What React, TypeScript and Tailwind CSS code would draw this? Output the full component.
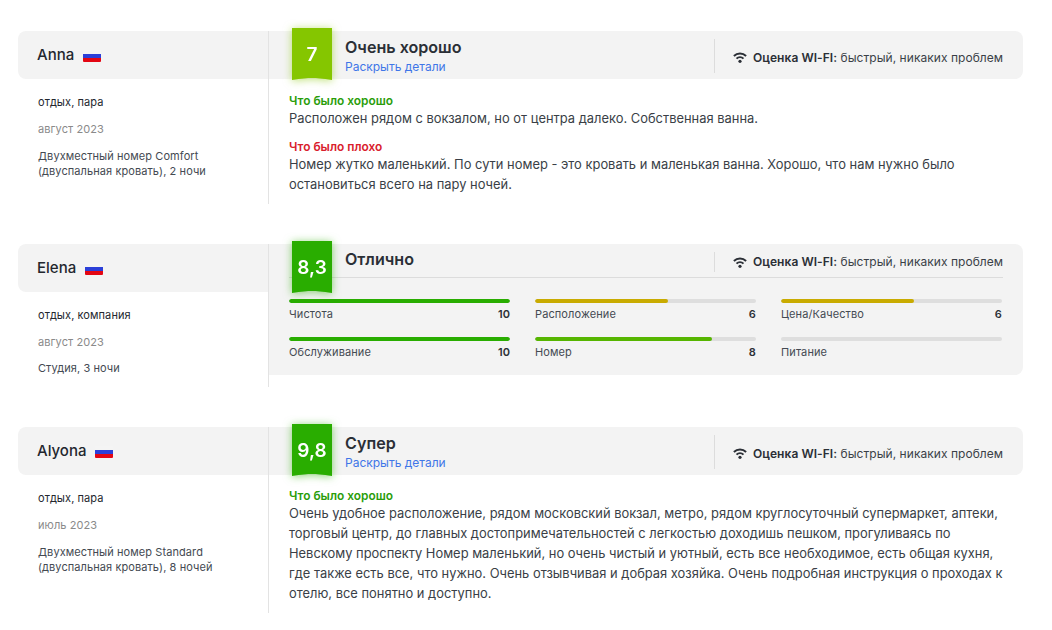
import React from "react";

const font = "font-['Inter','Noto_Sans',sans-serif]";

function Flag() {
  return (
    <span className="ml-[9px] mt-[2px] flex h-[12px] w-[18px] flex-col overflow-hidden rounded-[1px]">
      <span className="h-1 bg-[#f4f4f4]" />
      <span className="h-1 bg-[#2b3fd8]" />
      <span className="h-1 bg-[#e30613]" />
    </span>
  );
}

function Wifi() {
  return (
    <svg width="14" height="11" viewBox="0 0 14 11" className="shrink-0">
      <path d="M0.9 4a8.8 8.8 0 0 1 12.2 0" fill="none" stroke="#2b2f36" strokeWidth="2" />
      <path d="M3.5 6.6a5 5 0 0 1 7 0" fill="none" stroke="#2b2f36" strokeWidth="2" />
      <circle cx="7" cy="9.3" r="1.6" fill="#2b2f36" />
    </svg>
  );
}

function Badge({ value, color, glow }: { value: string; color: string; glow: string }) {
  return (
    <div className={`-mt-[3px] ml-[23px] h-[52px] w-10 shrink-0 ${glow}`}>
      <div
        className={`flex h-full w-full items-center justify-center pt-[2px] text-[19px] font-semibold text-white ${color} [clip-path:path('M0_0H40V52C30_50.5_25_50_20_50C15_50_10_50.5_0_52Z')]`}
      >
        {value}
      </div>
    </div>
  );
}

function WifiNote({ box }: { box: string }) {
  return (
    <div className={`flex w-[289px] shrink-0 items-center self-start border-l border-[#dcdcdc] pl-[18px] text-[12px] tracking-[0.05px] text-[#3a3f47] ${box}`}>
      <Wifi />
      <span className="ml-[6px] whitespace-nowrap">
        <b className="font-semibold text-[#2b2f36]">Оценка WI-FI:</b> быстрый, никаких проблем
      </span>
    </div>
  );
}

function LeftColumn({ name, trip, date, room, roomGap = "mt-3" }: { name: string; trip: string; date: string; room: React.ReactNode; roomGap?: string }) {
  return (
    <div className="w-[250px] shrink-0">
      <div className="flex h-12 items-center rounded-l-lg bg-[#f3f3f3] pl-[19px] text-[15px] font-medium text-[#23272e]">
        {name}
        <Flag />
      </div>
      <div className="pl-5 text-[11px] tracking-[0.08px] text-[#444a52]">
        <div className="mt-[15px] leading-4 text-[#23272e]">{trip}</div>
        <div className="mt-[11px] leading-4 text-[#8a8a8a]">{date}</div>
        <div className={`${roomGap} leading-[15px]`}>{room}</div>
      </div>
    </div>
  );
}

function Bar({ label, value, pct, color }: { label: string; value?: string; pct: number; color: string }) {
  return (
    <div className="w-[221px]">
      <div className="h-1 overflow-hidden rounded-full bg-[#dedede]">
        <div className={`h-full rounded-full ${color}`} style={{ width: `${pct}%` }} />
      </div>
      <div className="mt-[3px] flex justify-between text-[11px] leading-4 tracking-[0.1px] text-[#444a52]">
        <span>{label}</span>
        {value && <b className="font-semibold text-[#2b2f36]">{value}</b>}
      </div>
    </div>
  );
}

function Good({ children, mt }: { children: React.ReactNode; mt: string }) {
  return (
    <div className={`${mt} pl-5`}>
      <div className="text-[11.9px] font-semibold leading-[15px] text-[#2a9d0a]">Что было хорошо</div>
      <div className="text-[12.91px] leading-5 text-[#3a3f47]">{children}</div>
    </div>
  );
}

function DetailsHeader({ value, color, glow, title }: { value: string; color: string; glow: string; title: string }) {
  return (
    <div className="flex h-12 items-center rounded-r-lg bg-[#f3f3f3] pr-5">
      <div className="self-start">
        <Badge value={value} color={color} glow={glow} />
      </div>
      <div className="ml-[13px] flex-1">
        <div className="text-[16.1px] font-semibold leading-5 text-[#2b2f36]">{title}</div>
        <div className="mt-[3px] text-[12px] leading-[14px] text-[#3f76e8]">Раскрыть детали</div>
      </div>
      <WifiNote box="mt-2 h-[34px] pt-[3px]" />
    </div>
  );
}

const glowLight = "drop-shadow-[0_1px_4px_rgba(133,199,0,0.55)]";
const glowGreen = "drop-shadow-[0_1px_4px_rgba(42,173,0,0.55)]";

export default function App() {
  return (
    <div className={`${font} h-[630px] w-[1052px] overflow-hidden bg-white pl-[18px] pt-[31px]`}>
      <div className="flex h-[173px] w-[1005px]">
        <LeftColumn
          name="Anna"
          trip="отдых, пара"
          date="август 2023"
          room={<>Двухместный номер Comfort<br />(двуспальная кровать), 2 ночи</>}
        />
        <div className="flex-1 border-l border-[#e3e3e3]">
          <DetailsHeader value="7" color="bg-[#85c600]" glow={glowLight} title="Очень хорошо" />
          <Good mt="mt-[14px]">Расположен рядом с вокзалом, но от центра далеко. Собственная ванна.</Good>
          <div className="mt-[11px] pl-5">
            <div className="text-[11.9px] font-semibold leading-[15px] text-[#d9202c]">Что было плохо</div>
            <div className="text-[12.91px] leading-5 text-[#3a3f47]">
              Номер жутко маленький. По сути номер - это кровать и маленькая ванна. Хорошо, что нам нужно было<br />
              остановиться всего на пару ночей.
            </div>
          </div>
        </div>
      </div>

      <div className="mt-10 flex h-[143px] w-[1005px]">
        <LeftColumn name="Elena" trip="отдых, компания" date="август 2023" room="Студия, 3 ночи" roomGap="mt-[11px]" />
        <div className="flex-1 border-l border-[#e3e3e3]">
          <div className="h-[131px] rounded-r-lg bg-[#f3f3f3] pr-5">
            <div className="ml-5 flex h-[34px] items-center border-b border-[#dcdcdc]">
              <div className="-ml-5 self-start">
                <Badge value="8,3" color="bg-[#29ad00]" glow={glowGreen} />
              </div>
              <div className="ml-[13px] flex-1 pb-[2px] text-[16.1px] font-semibold text-[#2b2f36]">Отлично</div>
              <WifiNote box="mt-2 h-5" />
            </div>
            <div className="ml-5 mt-[21px] grid grid-cols-[221px_221px_221px] gap-x-[25px] gap-y-[15px]">
              <Bar label="Чистота" value="10" pct={100} color="bg-[#29ad00]" />
              <Bar label="Расположение" value="6" pct={60} color="bg-[#c9ab00]" />
              <Bar label="Цена/Качество" value="6" pct={60} color="bg-[#c9ab00]" />
              <Bar label="Обслуживание" value="10" pct={100} color="bg-[#29ad00]" />
              <Bar label="Номер" value="8" pct={80} color="bg-[#56b500]" />
              <Bar label="Питание" pct={0} color="bg-[#dedede]" />
            </div>
          </div>
        </div>
      </div>

      <div className="mt-10 flex h-[186px] w-[1005px]">
        <LeftColumn
          name="Alyona"
          trip="отдых, пара"
          date="июль 2023"
          room={<>Двухместный номер Standard<br />(двуспальная кровать), 8 ночей</>}
        />
        <div className="flex-1 border-l border-[#e3e3e3]">
          <DetailsHeader value="9,8" color="bg-[#29ad00]" glow={glowGreen} title="Супер" />
          <Good mt="mt-[13px]">
            Очень удобное расположение, рядом московский вокзал, метро, рядом круглосуточный супермаркет, аптеки,<br />
            торговый центр, до главных достопримечательностей с легкостью доходишь пешком, прогуливаясь по<br />
            Невскому проспекту Номер маленький, но очень чистый и уютный, есть все необходимое, есть общая кухня,<br />
            где также есть все, что нужно. Очень отзывчивая и добрая хозяйка. Очень подробная инструкция о проходах к<br />
            отелю, все понятно и доступно.
          </Good>
        </div>
      </div>
    </div>
  );
}
